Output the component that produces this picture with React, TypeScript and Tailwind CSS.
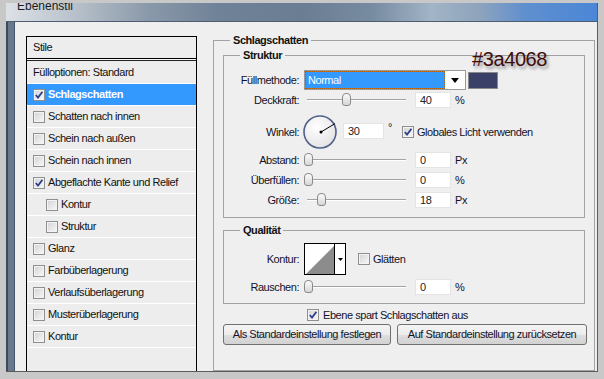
import React from 'react'

type Row = { label: string; checked?: boolean; selected?: boolean; indent?: boolean }

const styleRows: Row[] = [
  { label: 'Schlagschatten', checked: true, selected: true },
  { label: 'Schatten nach innen' },
  { label: 'Schein nach außen' },
  { label: 'Schein nach innen' },
  { label: 'Abgeflachte Kante und Relief', checked: true },
  { label: 'Kontur', indent: true },
  { label: 'Struktur', indent: true },
  { label: 'Glanz' },
  { label: 'Farbüberlagerung' },
  { label: 'Verlaufsüberlagerung' },
  { label: 'Musterüberlagerung' },
  { label: 'Kontur' },
]

function Check({ checked }: { checked?: boolean }) {
  return (
    <span className="flex w-[12px] h-[12px] shrink-0 border border-[#8e8f8f] bg-[linear-gradient(135deg,#d2d2d2,#f9f9f9)]">
      <span className="flex items-center justify-center w-full h-full border border-[#f3f3f3]">
        {checked && (
          <svg width="8" height="8" viewBox="0 0 8 8">
            <path d="M0.8 4 L3 6.6 L7.4 0.8" fill="none" stroke="#2c3d8c" strokeWidth="1.7" />
          </svg>
        )}
      </span>
    </span>
  )
}

function Label({ children }: { children: React.ReactNode }) {
  return <span className="w-[75px] shrink-0 text-right">{children}</span>
}

function Slider({ thumb }: { thumb: string }) {
  return (
    <div className="relative ml-[5px] w-[104px] h-[14px] shrink-0">
      <div className="absolute left-[3px] right-[2px] top-[6px] h-[2px] border-t border-[#a3a3a3] border-b border-b-white" />
      <div
        className={`absolute top-[0px] ${thumb} w-[9px] h-[13px] rounded-t-[4px] rounded-b-[3px] border border-[#8a8a8a] bg-[linear-gradient(to_bottom,#fbfbfb,#d6d6d6)]`}
      />
    </div>
  )
}

function Num({ v }: { v: string }) {
  return (
    <div className="ml-[7px] flex items-center w-[36px] h-[16px] shrink-0 bg-white border border-[#e4e4e4] pl-[4px] text-[#222]">
      {v}
    </div>
  )
}

function SliderRow({ label, thumb, v, unit }: { label: string; thumb: string; v: string; unit: string }) {
  return (
    <div className="flex items-center h-[20px]">
      <Label>{label}</Label>
      <Slider thumb={thumb} />
      <Num v={v} />
      <span className="ml-[4px]">{unit}</span>
    </div>
  )
}

function Legend({ children }: { children: React.ReactNode }) {
  return (
    <span className="absolute left-[16px] top-[-7px] px-[3px] bg-[#efefef] font-bold leading-[13px] text-[#111]">
      {children}
    </span>
  )
}

function Button({ children, w }: { children: React.ReactNode; w: string }) {
  return (
    <div
      className={`${w} h-[21px] flex items-center justify-center rounded-[3px] border border-[#707070] bg-[linear-gradient(to_bottom,#f4f4f4_0%,#ececec_50%,#dedede_50%,#d2d2d2_100%)]`}
    >
      {children}
    </div>
  )
}

export default function App() {
  return (
    <div className="w-[604px] h-[379px] overflow-hidden bg-[#c8c8c8] pt-[3px] pl-[6px] font-['Liberation_Sans',Arial,sans-serif] text-[11px] leading-[13px] tracking-[-0.45px] text-[#12122a]">
      <div className="w-[592px] h-[369px] flex flex-col border-r border-b border-[#5c5c5c]">
        {/* title bar */}
        <div className="h-[19px] shrink-0 overflow-hidden border-b border-[#4f5d70] pl-[11px] bg-[linear-gradient(to_right,#dce1e6_0%,#b7c0ca_12%,#8a99aa_24%,#708298_36%,#6b7d93_50%,#778ba1_62%,#a2b4c6_72%,#8ea4bc_80%,#5f8fcf_88%,#4b86d6_100%)]">
          <div className="-mt-[3px] text-[12px] leading-[12px] tracking-normal text-[#1a1a1a]">Ebenenstil</div>
        </div>

        <div className="flex flex-1 min-h-0">
          <div className="w-[9px] shrink-0 bg-[linear-gradient(to_right,#3d4a5c_0px,#3d4a5c_2px,#68798e_2px,#68798e_8px,#46546a_8px)]" />

          <div className="flex-1 flex items-start bg-[#efefef]">
            {/* styles list */}
            <div className="ml-[11px] mt-[14px] w-[171px] h-[335px] shrink-0 flex flex-col border-l border-r border-t border-black bg-[#ededed] text-[#111]">
              <div className="h-[22px] flex items-center pl-[6px] border-b border-black">Stile</div>
              <div className="h-[1px] bg-[#f8f8f8]" />
              <div className="h-[1px] bg-[#222]" />
              <div className="h-[23px] flex items-center pl-[6px] border-b border-white">Fülloptionen: Standard</div>
              {styleRows.map((r, i) => (
                <div
                  key={i}
                  className={`h-[22px] flex items-center gap-[3px] border-b border-white ${r.indent ? 'pl-[19px]' : 'pl-[6px]'} ${
                    r.selected ? 'bg-[#3399ff] text-white font-bold' : ''
                  }`}
                >
                  <Check checked={r.checked} />
                  <span>{r.label}</span>
                </div>
              ))}
            </div>

            {/* Schlagschatten group */}
            <div className="relative ml-[16px] mt-[18px] w-[382px] h-[331px] shrink-0 flex flex-col pl-[9px] pt-[14px] border border-[#a2a2a2]">
              <Legend>Schlagschatten</Legend>

              <div className="relative w-[362px] h-[163px] shrink-0 flex flex-col border border-[#a2a2a2]">
                <Legend>Struktur</Legend>
                <span className="absolute left-[248px] top-[-7px] text-[20px] leading-[20px] tracking-[-0.4px] text-[#3e0c0c] [text-shadow:2px_3px_3px_rgba(0,0,0,0.35)]">
                  #3a4068
                </span>

                <div className="mt-[14px] flex items-center h-[20px]">
                  <Label>Füllmethode:</Label>
                  <div className="ml-[5px] w-[162px] h-[20px] flex border border-[#9a9a9a] bg-white">
                    <div className="w-[140px] h-full flex items-center pl-[2px] bg-[#3399ff] border border-dotted border-[#b65a00] text-white">
                      Normal
                    </div>
                    <div className="flex-1 flex items-center justify-center">
                      <svg width="8" height="5" viewBox="0 0 8 5">
                        <polygon points="0,0 8,0 4,5" fill="#000" />
                      </svg>
                    </div>
                  </div>
                  <div className="ml-[2px] w-[30px] h-[17px] bg-[#3a4068] border border-[#8a8a8a]" />
                </div>

                <SliderRow label="Deckkraft:" thumb="left-[38px]" v="40" unit="%" />

                <div className="mt-[4px] flex items-center h-[36px]">
                  <Label>Winkel:</Label>
                  <svg className="ml-[4px] shrink-0" width="34" height="34" viewBox="0 0 34 34">
                    <defs>
                      <radialGradient id="dial" cx="0.4" cy="0.35" r="0.7">
                        <stop offset="0" stopColor="#ffffff" />
                        <stop offset="1" stopColor="#e2e2e2" />
                      </radialGradient>
                    </defs>
                    <circle cx="17" cy="17" r="16" fill="url(#dial)" stroke="#51608a" strokeWidth="1.6" />
                    <line x1="18" y1="17" x2="32" y2="8.6" stroke="#000" strokeWidth="1" />
                    <circle cx="18" cy="17" r="1.5" fill="#000" />
                  </svg>
                  <div className="ml-[6px] self-start mt-[9px] flex items-center w-[41px] h-[16px] shrink-0 bg-white border border-[#e4e4e4] pl-[4px] text-[#222]">
                    30
                  </div>
                  <span className="ml-[4px] self-start mt-[7px]">°</span>
                  <span className="ml-[10px]">
                    <Check checked />
                  </span>
                  <span className="ml-[3px]">Globales Licht verwenden</span>
                </div>

                <SliderRow label="Abstand:" thumb="left-[0px]" v="0" unit="Px" />
                <SliderRow label="Überfüllen:" thumb="left-[0px]" v="0" unit="%" />
                <SliderRow label="Größe:" thumb="left-[13px]" v="18" unit="Px" />
              </div>

              <div className="relative mt-[12px] w-[362px] h-[74px] shrink-0 flex flex-col border border-[#a2a2a2]">
                <Legend>Qualität</Legend>
                <div className="mt-[12px] flex items-center h-[32px]">
                  <Label>Kontur:</Label>
                  <div className="ml-[5px] w-[42px] h-[32px] shrink-0 flex border border-black bg-white">
                    <svg width="29" height="30" viewBox="0 0 29 30">
                      <polygon points="1,30 29,2 29,30" fill="#8c8c8c" />
                    </svg>
                    <div className="w-[11px] flex items-center justify-center border-l border-black">
                      <svg width="5" height="3" viewBox="0 0 5 3">
                        <polygon points="0,0 5,0 2.5,3" fill="#000" />
                      </svg>
                    </div>
                  </div>
                  <span className="ml-[12px]">
                    <Check />
                  </span>
                  <span className="ml-[3px]">Glätten</span>
                </div>
                <div className="mt-[2px]">
                  <SliderRow label="Rauschen:" thumb="left-[0px]" v="0" unit="%" />
                </div>
              </div>

              <div className="mt-[2px] h-[18px] flex items-center pl-[84px]">
                <Check checked />
                <span className="ml-[4px]">Ebene spart Schlagschatten aus</span>
              </div>

              <div className="flex gap-[6px]">
                <Button w="w-[168px]">Als Standardeinstellung festlegen</Button>
                <Button w="w-[190px]">Auf Standardeinstellung zurücksetzen</Button>
              </div>
            </div>
          </div>
        </div>
      </div>
    </div>
  )
}
